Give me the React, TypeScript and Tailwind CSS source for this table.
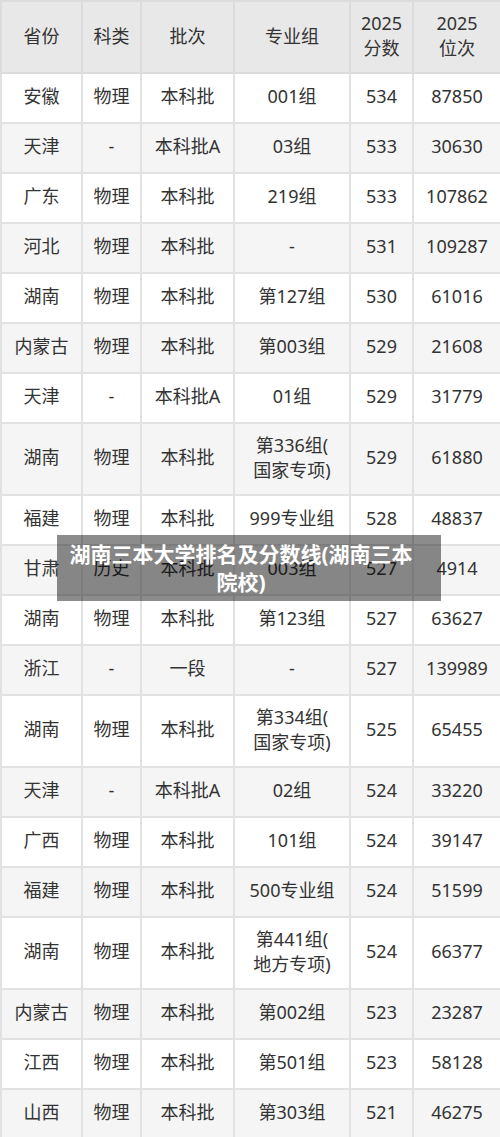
const headers: [string, string?][] = [
  ["省份"],
  ["科类"],
  ["批次"],
  ["专业组"],
  ["2025", "分数"],
  ["2025", "位次"],
];

type Row = [string, string, string, string[], string, string];

const rows: Row[] = [
  ["安徽", "物理", "本科批", ["001组"], "534", "87850"],
  ["天津", "-", "本科批A", ["03组"], "533", "30630"],
  ["广东", "物理", "本科批", ["219组"], "533", "107862"],
  ["河北", "物理", "本科批", ["-"], "531", "109287"],
  ["湖南", "物理", "本科批", ["第127组"], "530", "61016"],
  ["内蒙古", "物理", "本科批", ["第003组"], "529", "21608"],
  ["天津", "-", "本科批A", ["01组"], "529", "31779"],
  ["湖南", "物理", "本科批", ["第336组(", "国家专项)"], "529", "61880"],
  ["福建", "物理", "本科批", ["999专业组"], "528", "48837"],
  ["甘肃", "历史", "本科批", ["003组"], "527", "4914"],
  ["湖南", "物理", "本科批", ["第123组"], "527", "63627"],
  ["浙江", "-", "一段", ["-"], "527", "139989"],
  ["湖南", "物理", "本科批", ["第334组(", "国家专项)"], "525", "65455"],
  ["天津", "-", "本科批A", ["02组"], "524", "33220"],
  ["广西", "物理", "本科批", ["101组"], "524", "39147"],
  ["福建", "物理", "本科批", ["500专业组"], "524", "51599"],
  ["湖南", "物理", "本科批", ["第441组(", "地方专项)"], "524", "66377"],
  ["内蒙古", "物理", "本科批", ["第002组"], "523", "23287"],
  ["江西", "物理", "本科批", ["第501组"], "523", "58128"],
  ["山西", "物理", "本科批", ["第303组"], "521", "46275"],
];

const widths = ["w-[81px]", "w-[59px]", "w-[93px]", "w-[116px]", "w-[63px]", "w-[88px]"];

const cell = "border-2 border-[#e2e2e2] p-0 pb-[3px] text-center";

export default function App() {
  return (
    <div className="relative w-[500px] bg-white font-['Noto_Sans','Noto_Sans_CJK_SC',sans-serif] text-[18px] text-[#333]">
      <table className="w-[500px] table-fixed border-collapse">
        <colgroup>
          {widths.map((w, i) => (
            <col key={i} className={w} />
          ))}
        </colgroup>
        <thead>
          <tr className="h-[72px] bg-[#e8e8e8]">
            {headers.map(([a, b], i) => (
              <th
                key={i}
                className="border-2 border-[#dcdcdc] p-0 pb-[2px] text-center font-normal leading-[25px]"
              >
                {a}
                {b && <br />}
                {b}
              </th>
            ))}
          </tr>
        </thead>
        <tbody>
          {rows.map((r, i) => (
            <tr
              key={i}
              className={`${r[3].length > 1 ? "h-[72px]" : "h-[50px]"} ${
                i % 2 === 0 ? "bg-white" : "bg-[#f5f5f5]"
              }`}
            >
              <td className={cell}>{r[0]}</td>
              <td className={cell}>{r[1]}</td>
              <td className={cell}>{r[2]}</td>
              <td className={`${cell} leading-[25px]`}>
                {r[3].map((l, j) => (
                  <div key={j}>{l}</div>
                ))}
              </td>
              <td className={cell}>{r[4]}</td>
              <td className={cell}>{r[5]}</td>
            </tr>
          ))}
        </tbody>
      </table>

      {/* caption overlay */}
      <div className="absolute left-[57px] top-[535px] flex h-[66px] w-[384px] items-center justify-center bg-black/45 pl-[6px] pr-[22px] text-center text-[21px] font-bold leading-[28px] text-white">
        湖南三本大学排名及分数线(湖南三本院校)
      </div>
    </div>
  );
}
